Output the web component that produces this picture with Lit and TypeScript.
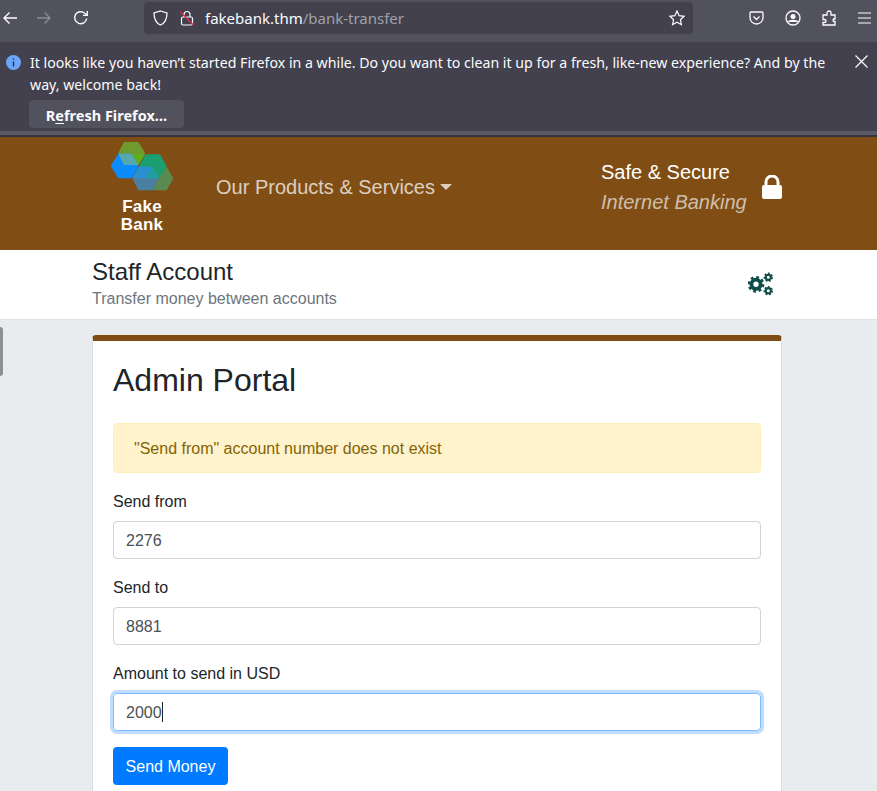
import { LitElement, html, css, svg } from "lit";
import { customElement } from "lit/decorators.js";

// one gear: body ring plus a dashed stroke for the teeth
const gear = (cx: number, cy: number, r: number, hole: number, teeth: number) => {
  const tr = r * 0.86;
  const c = 2 * Math.PI * tr;
  const body = r * 0.78;
  return svg`
    <circle cx=${cx} cy=${cy} r=${tr} fill="none" stroke="#0f4c4a" stroke-width=${r * 0.3}
      stroke-dasharray="${c / teeth / 2} ${c / teeth / 2}" />
    <circle cx=${cx} cy=${cy} r=${(body + hole) / 2} fill="none" stroke="#0f4c4a" stroke-width=${body - hole} />
  `;
};

@customElement("app-root")
export class AppRoot extends LitElement {
  static styles = css`
    :host {
      display: block;
      position: relative;
      height: 791px;
      overflow: hidden;
      background: #e9ecef;
      font-family: "Liberation Sans", Arial, sans-serif;
      color: #212529;
    }
    svg { display: block; flex: none; }

    /* browser chrome */
    .toolbar {
      height: 42px;
      box-sizing: border-box;
      background: #52525e;
      display: flex;
      align-items: flex-start;
      padding: 2px 0 0 0;
      font-family: "Noto Sans", sans-serif;
    }
    .nav { display: flex; width: 144px; padding-top: 8px; box-sizing: border-box; }
    .nav svg { margin-right: 18px; }
    .nav svg:first-child { margin-left: 2px; }
    .nav svg:last-child { margin-left: 3px; }
    .urlbar {
      width: 549px;
      height: 32px;
      box-sizing: border-box;
      background: #42414d;
      border-radius: 4px;
      display: flex;
      align-items: center;
      padding: 0 8px 0 9px;
      font-size: 15px;
      color: #fbfbfe;
    }
    .urlbar .shield { margin-right: 12px; }
    .urlbar .addr { margin-left: 11px; flex: 1; white-space: nowrap; }
    .urlbar .path { color: #a0a0a8; }
    .tools { display: flex; padding: 8px 0 0 55.5px; gap: 21px; }
    .notice {
      height: 89px;
      box-sizing: border-box;
      background: #42414d;
      color: #fbfbfe;
      font-family: "Noto Sans", sans-serif;
      font-size: 14.16px;
      line-height: 22px;
      padding: 10px 0 0 6px;
      display: flex;
    }
    .notice .info { margin: 3px 9px 0 0; }
    .notice .body { width: 810px; }
    .notice .close { margin: 3px 0 0 15px; }
    .notice button {
      display: block;
      margin: 4px 0 0 -1px;
      width: 155px;
      height: 28px;
      border: 0;
      border-radius: 4px;
      background: #52525e;
      color: #fbfbfe;
      font: bold 14.5px "Noto Sans", sans-serif;
      padding: 1px 0 0;
    }
    .notice u { text-underline-offset: 2px; }
    .chrome-gap {
      height: 4px;
      background: #5a5a66;
      border-bottom: 2px solid #35343e;
    }

    /* site header */
    .site {
      height: 113px;
      background: #804e14;
      display: flex;
      padding-left: 110px;
      box-sizing: border-box;
    }
    .brand { width: 64px; text-align: center; }
    .brand div {
      color: #fff;
      font-weight: bold;
      font-size: 17px;
      letter-spacing: 0.25px;
      line-height: 18px;
      margin-top: 6px;
    }
    .menu {
      margin-left: 42px;
      width: 385px;
      font-size: 20px;
      color: #dccfc0;
      line-height: 24px;
      padding-top: 38px;
      display: flex;
    }
    .menu i {
      width: 0;
      height: 0;
      margin: 9px 0 0 5px;
      border: 6px solid transparent;
      border-bottom: 0;
      border-top-color: #dccfc0;
    }
    .secure { font-size: 20px; line-height: 30px; padding-top: 20px; color: #fff; width: 161px; }
    .secure em { display: block; color: #cdbfae; }
    .lock { margin-top: 38px; }

    /* account strip */
    .account {
      height: 70px;
      box-sizing: border-box;
      background: #fff;
      border-bottom: 1px solid #dee2e6;
      padding: 7px 0 0 92px;
      display: flex;
    }
    .account .who { width: 656px; }
    .account h2 { margin: 0; font-size: 24px; font-weight: 400; line-height: 29px; }
    .account p { margin: 3px 0 0; font-size: 16px; line-height: 19px; color: #6c757d; }
    .account svg { margin-top: 15px; }

    .tab {
      position: absolute;
      left: -5px;
      top: 327px;
      width: 8px;
      height: 49px;
      border-radius: 3px;
      background: #8f8f8f;
    }

    /* card */
    .page { padding: 15px 0 0 92px; }
    .card {
      width: 690px;
      box-sizing: border-box;
      background: #fff;
      border: 1px solid #dcdfe2;
      border-top: 6px solid #804e14;
      border-radius: 4px 4px 0 0;
      padding: 20px 20px 30px;
    }
    h1 { margin: 0 0 24px; font-size: 32px; font-weight: 400; line-height: 38px; }
    .alert {
      height: 50px;
      box-sizing: border-box;
      padding: 13px 20px 11px;
      margin-bottom: 16px;
      background: #fff3cd;
      border: 1px solid #ffeeba;
      border-radius: 4px;
      color: #856404;
      font-size: 16px;
      line-height: 24px;
    }
    label { display: block; font-size: 16px; line-height: 24px; padding-top: 1px; margin-bottom: 7px; }
    .field {
      height: 38px;
      box-sizing: border-box;
      border: 1px solid #ced4da;
      border-radius: 4px;
      padding: 7px 12px 5px;
      margin-bottom: 16px;
      font-size: 16px;
      line-height: 24px;
      color: #495057;
      display: flex;
    }
    .field.focus {
      border-color: #80bdff;
      box-shadow: 0 0 0 3px rgba(0, 123, 255, 0.25);
    }
    .caret { width: 1px; height: 20px; margin-top: 1px; background: #212529; }
    .send {
      display: block;
      height: 38px;
      width: 115px;
      border: 0;
      border-radius: 4px;
      background: #007bff;
      color: #fff;
      font: 16px "Liberation Sans", Arial, sans-serif;
      padding: 2px 0 0;
    }
  `;

  renderToolbar() {
    return html`
      <div class="toolbar">
        <div class="nav">
          <svg width="16" height="16" viewBox="0 0 16 16" fill="none" stroke="#fbfbfe" stroke-width="1.4">
            <path d="M15 8H2M7.500 2.500 2 8l5.500 5.500" />
          </svg>
          <svg width="16" height="16" viewBox="0 0 16 16" fill="none" stroke="#8d8d96" stroke-width="1.4">
            <path d="M1 8h13M8.500 2.500 14 8l-5.500 5.500" />
          </svg>
          <svg width="16" height="16" viewBox="0 0 16 16" fill="none" stroke="#fbfbfe" stroke-width="1.4">
            <path d="M13.600 8.500A6 6 0 1 1 11.600 3.200L14 5" />
            <path d="M14.300 1v4.400H10" />
          </svg>
        </div>
        <div class="urlbar">
          <svg class="shield" width="15" height="16" viewBox="0 0 15 16" fill="none" stroke="#fbfbfe" stroke-width="1.3">
            <path d="M7.500 1 14 3c0 6-1.500 10-6.500 12C2.500 13 1 9 1 3Z" />
          </svg>
          <svg width="14" height="16" viewBox="0 0 14 16" fill="none">
            <rect x="1.500" y="7" width="11" height="8" rx="1.500" stroke="#fbfbfe" stroke-width="1.2" />
            <path d="M4 7V4.500a3 3 0 0 1 6 0V7" stroke="#fbfbfe" stroke-width="1.2" />
            <path d="M0 1.500 13.500 15" stroke="#e22850" stroke-width="1.3" />
          </svg>
          <span class="addr">fakebank.thm<span class="path">/bank-transfer</span></span>
          <svg width="16" height="16" viewBox="0 0 16 16" fill="none" stroke="#fbfbfe" stroke-width="1.2">
            <path d="m8 1 2.100 4.700 5 .6-3.700 3.400 1 5L8 12.200l-4.400 2.500 1-5L.9 6.300l5-.6Z" />
          </svg>
        </div>
        <div class="tools">
          <svg width="15" height="16" viewBox="0 0 15 16" fill="none" stroke="#fbfbfe" stroke-width="1.300">
            <path d="M2 2h11a1 1 0 0 1 1 1v4.500a6.500 6.500 0 0 1-13 0V3a1 1 0 0 1 1-1Z" />
            <path d="m4.500 6.500 3 3 3-3" />
          </svg>
          <svg width="16" height="16" viewBox="0 0 16 16" fill="none" stroke="#fbfbfe" stroke-width="1.300">
            <circle cx="8" cy="8" r="7" />
            <circle cx="8" cy="6.500" r="2.500" fill="#fbfbfe" stroke="none" />
            <path d="M3.500 12c1-2 8-2 9 0" fill="#fbfbfe" />
          </svg>
          <svg width="15" height="16" viewBox="0 0 15 16" fill="none" stroke="#fbfbfe" stroke-width="1.300">
            <path d="M1 5h4V3a2 2 0 0 1 4 0v2h4v4h-1.500a2 2 0 0 0 0 2.500H13V15H1v-2.500h1.500a1.500 1.500 0 0 0 0-3H1Z" />
          </svg>
          <svg width="13" height="16" viewBox="0 0 13 16" fill="none" stroke="#fbfbfe" stroke-width="1.200">
            <path d="M0 3h13M0 8h13M0 13h13" />
          </svg>
        </div>
      </div>
    `;
  }

  renderNotice() {
    return html`
      <div class="notice">
        <svg class="info" width="15" height="15" viewBox="0 0 15 15">
          <circle cx="7.500" cy="7.500" r="7.500" fill="#6da5f7" />
          <path d="M7.500 3.500v1.300M7.500 6.500v5" stroke="#22223a" stroke-width="1.300" />
        </svg>
        <div class="body">
          It looks like you haven’t started Firefox in a while. Do you want to clean it up for a fresh, like-new experience? And by the way, welcome back!
          <button>R<u>e</u>fresh Firefox…</button>
        </div>
        <svg class="close" width="13" height="13" viewBox="0 0 13 13" stroke="#fbfbfe" stroke-width="1.300">
          <path d="m.5.5 12 12M12.500.5l-12 12" />
        </svg>
      </div>
      <div class="chrome-gap"></div>
    `;
  }

  renderHeader() {
    return html`
      <div class="site">
        <div class="brand">
          <svg width="64" height="55" viewBox="15 3 192 165">
            <polygon points="40,50 57,18 100,18 120,50 100,87 57,87" fill="#6f9a2e" />
            <polygon points="17,90 40,53 80,53 100,90 80,127 40,127" fill="#0a8cff" />
            <polygon points="40,53 80,53 100,87 57,87" fill="#55a8b0" />
            <polygon points="102,90 122,55 165,55 185,90 165,127 122,127" fill="#1b9f70" />
            <polygon points="82,55 120,55 100,87" fill="#5cb020" />
            <polygon points="82,127 100,92 143,92 162,127 143,163 100,163" fill="#4a7fa0" />
            <polygon points="100,92 143,92 122,127 82,127" fill="#2a90d0" />
            <polygon points="143,92 162,127 122,127" fill="#1f9fa0" />
            <polygon points="143,163 162,127 185,92 205,127 185,163" fill="#5a8a50" />
          </svg>
          <div>Fake<br />Bank</div>
        </div>
        <div class="menu">Our Products &amp; Services<i></i></div>
        <div class="secure">Safe &amp; Secure<em>Internet Banking</em></div>
        <svg class="lock" width="20" height="24" viewBox="0 0 20 24">
          <path d="M4 11V7a6 6 0 0 1 12 0v4" fill="none" stroke="#fff" stroke-width="3" />
          <rect y="10" width="20" height="14" rx="2" fill="#fff" />
        </svg>
      </div>
    `;
  }

  renderCard() {
    return html`
      <div class="page">
        <div class="card">
          <h1>Admin Portal</h1>
          <div class="alert">"Send from" account number does not exist</div>
          <label>Send from</label>
          <div class="field">2276</div>
          <label>Send to</label>
          <div class="field">8881</div>
          <label>Amount to send in USD</label>
          <div class="field focus">2000<span class="caret"></span></div>
          <button class="send">Send Money</button>
        </div>
      </div>
    `;
  }

  render() {
    return html`
      ${this.renderToolbar()}
      ${this.renderNotice()}
      ${this.renderHeader()}
      <div class="account">
        <div class="who">
          <h2>Staff Account</h2>
          <p>Transfer money between accounts</p>
        </div>
        <svg width="27" height="25" viewBox="0 -1 27 25">
          ${gear(8, 11.3, 8.3, 2.7, 8)}
          ${gear(20.3, 4.3, 4.7, 1.5, 7)}
          ${gear(20.3, 17.7, 4.7, 1.5, 7)}
        </svg>
      </div>
      <div class="tab"></div>
      ${this.renderCard()}
    `;
  }
}
